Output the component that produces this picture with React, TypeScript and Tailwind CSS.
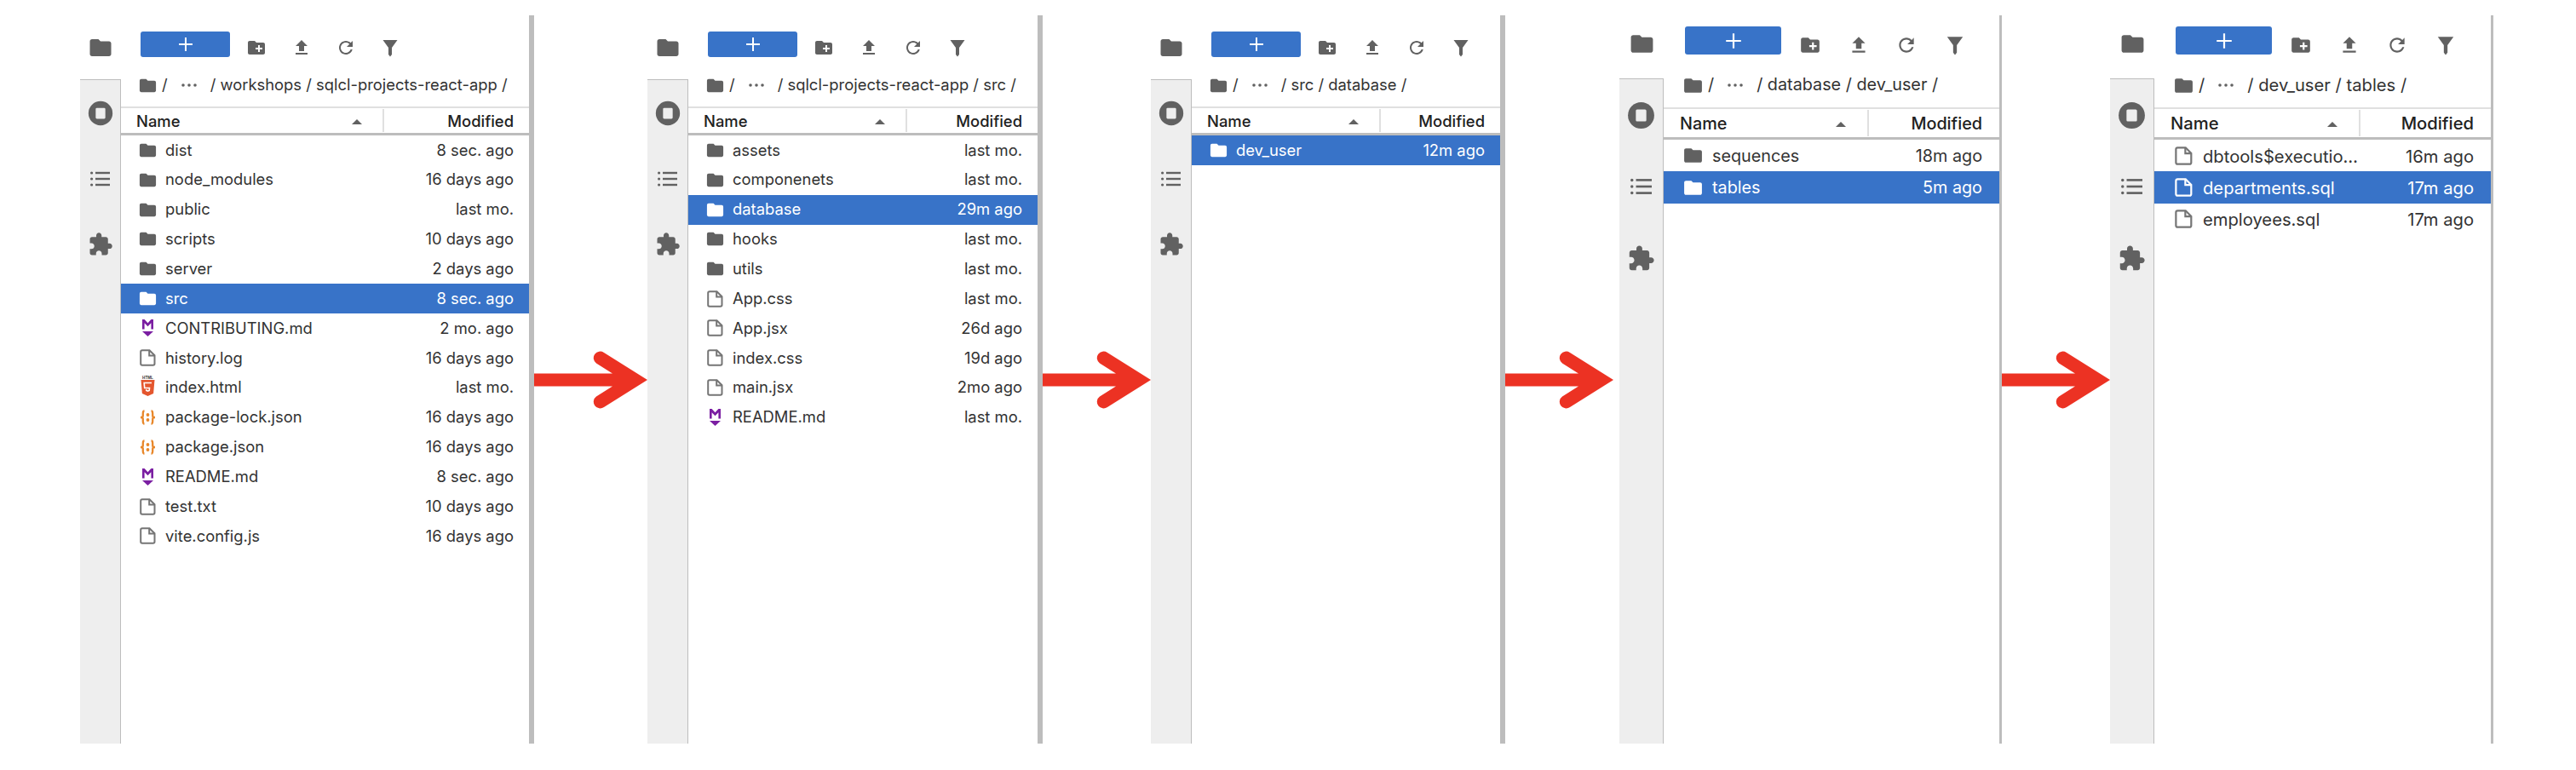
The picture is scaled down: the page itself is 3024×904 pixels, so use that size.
import { FC } from "react";

type Kind = "folder" | "file" | "md" | "html" | "json";

interface Row {
  name: string;
  modified: string;
  kind: Kind;
  selected?: boolean;
}

interface Size {
  sidebar: string;
  sideItem: string;
  sideTop: string;
  topFolder: string;
  stop: string;
  puzzle: string;
  list: string;
  toolbar: string;
  button: string;
  plus: string;
  slot: string;
  tool: string;
  crumb: string;
  header: string;
  namePad: string;
  modPad: string;
  row: string;
  rowText: string;
  rowPad: string;
  icon: string;
  iconBox: string;
  divider: string;
}

const normal: Size = {
  sidebar: "w-[48px]",
  sideItem: "h-[77px]",
  sideTop: "h-[75px]",
  topFolder: "w-[30px] h-[30px]",
  stop: "w-[34px] h-[34px]",
  puzzle: "w-[30px] h-[30px]",
  list: "w-[23px] h-[18px]",
  toolbar: "h-[57px] pt-[19px] pl-[23px]",
  button: "w-[105px] h-[30px] mr-[5px]",
  plus: "w-[20px] h-[20px]",
  slot: "w-[52.4px]",
  tool: "w-[24px] h-[24px]",
  crumb: "h-[50px] pl-[22px]",
  header: "h-[34px] pl-[18px]",
  namePad: "pr-[24px]",
  modPad: "pr-[18px]",
  row: "h-[34.85px] pl-[22px] pr-[18px]",
  rowText: "",
  rowPad: "w-[30px]",
  icon: "w-[23px] h-[23px]",
  iconBox: "w-[19px] h-[20px]",
  divider: "border-r-[6px]",
};

const large: Size = {
  sidebar: "w-[52px]",
  sideItem: "h-[84px]",
  sideTop: "h-[74px] pb-[8px]",
  topFolder: "w-[31px] h-[31px]",
  stop: "w-[37px] h-[37px]",
  puzzle: "w-[33px] h-[33px]",
  list: "w-[25px] h-[20px]",
  toolbar: "h-[56px] pt-[13px] pl-[25px]",
  button: "w-[113px] h-[33px] mr-[6px]",
  plus: "w-[22px] h-[22px]",
  slot: "w-[56.5px]",
  tool: "w-[26px] h-[26px]",
  crumb: "h-[52px] pl-[24px]",
  header: "h-[38px] pl-[19px]",
  namePad: "pr-[25px]",
  modPad: "pr-[20px]",
  row: "h-[37.4px] pl-[24px] pr-[20px]",
  rowText: "pt-[2px]",
  rowPad: "w-[33px]",
  icon: "w-[25px] h-[25px]",
  iconBox: "w-[21px] h-[22px]",
  divider: "border-r-[3px]",
};

const FOLDER =
  "M10 4H4c-1.1 0-1.99.9-1.99 2L2 18c0 1.1.9 2 2 2h16c1.1 0 2-.9 2-2V8c0-1.1-.9-2-2-2h-8l-2-2z";
const NEW_FOLDER =
  "M20 6h-8l-2-2H4c-1.11 0-1.99.89-1.99 2L2 18c0 1.11.89 2 2 2h16c1.11 0 2-.89 2-2V8c0-1.11-.89-2-2-2zm-1 8h-3v3h-2v-3h-3v-2h3V9h2v3h3v2z";
const UPLOAD = "M9 16h6v-6h4l-7-7-7 7h4zm-4 2h14v2H5z";
const REFRESH =
  "M17.65 6.35C16.2 4.9 14.21 4 12 4c-4.42 0-7.99 3.58-7.99 8s3.57 8 7.99 8c3.73 0 6.84-2.55 7.73-6h-2.08c-.82 2.33-3.04 4-5.65 4-3.31 0-6-2.69-6-6s2.69-6 6-6c1.66 0 3.14.69 4.22 1.78L13 11h7V4l-2.35 2.35z";
const FILTER = "M3.5 3h17L14 12V20l-2 2.5L10 20v-8z";
const PUZZLE =
  "M20.5 11H19V7c0-1.1-.9-2-2-2h-4V3.5C13 2.12 11.88 1 10.5 1S8 2.12 8 3.5V5H4c-1.1 0-1.99.9-1.99 2v3.8H3.5c1.49 0 2.7 1.21 2.7 2.7s-1.21 2.7-2.7 2.7H2V20c0 1.1.9 2 2 2h3.8v-1.5c0-1.49 1.21-2.7 2.7-2.7 1.49 0 2.7 1.21 2.7 2.7V22H17c1.1 0 2-.9 2-2v-4h1.5c1.38 0 2.5-1.12 2.5-2.5S21.88 11 20.5 11z";

const Glyph: FC<{ d: string; className: string }> = ({ d, className }) => (
  <svg viewBox="0 0 24 24" className={`shrink-0 fill-current ${className}`}>
    <path d={d} />
  </svg>
);

const FileIcon: FC<{ className: string }> = ({ className }) => (
  <svg viewBox="0 0 19 20" className={`shrink-0 ${className}`} fill="none" stroke="currentColor" strokeWidth="2">
    <path d="M3 1.2h8.5l6 6V17a1.8 1.8 0 0 1-1.8 1.8H3A1.8 1.8 0 0 1 1.2 17V3A1.8 1.8 0 0 1 3 1.2z" />
    <path d="M11.2 1.2v6.2h6.2" />
  </svg>
);

const MarkdownIcon: FC<{ className: string }> = ({ className }) => (
  <svg viewBox="0 0 19 20" className={`shrink-0 overflow-visible ${className}`}>
    <path d="M3 0h2.600L9.500 4.200 13.400 0H16v11.500h-2.600V4.200L9.500 8.200 5.600 4.200v7.300H3z" fill="#7b1fa2" />
    <path d="M3 14h13l-6.500 6z" fill="#7b1fa2" />
  </svg>
);

const HtmlIcon: FC<{ className: string }> = ({ className }) => (
  <svg viewBox="0 0 19 20" className={`shrink-0 overflow-visible ${className}`}>
    <text x="9.5" y="-0.5" textAnchor="middle" fontSize="4.6" fontWeight="700" fill="#333" fontFamily="Liberation Sans, sans-serif">
      HTML
    </text>
    <path d="M1.500 1h16l-1.400 16L9.500 20l-6.600-3z" fill="#e4562e" />
    <path d="M14 4.500H5.200l.5 6h5.800l-.3 3-1.700.6-1.700-.6-.1-1.400" fill="none" stroke="#fff" strokeWidth="1.600" />
  </svg>
);

const JsonIcon: FC<{ className: string }> = ({ className }) => (
  <svg viewBox="0 0 19 20" className={`shrink-0 ${className}`} fill="none" stroke="#e8872a" strokeWidth="2.300">
    <path d="M5.500 2.500C3.800 2.500 3.800 4 3.800 5.500v2.700C3.800 9.300 2.800 10 1 10c1.800 0 2.800.7 2.800 1.800v2.700c0 1.500 0 3 1.700 3" />
    <path d="M13.500 2.500c1.700 0 1.700 1.500 1.700 3v2.700c0 1.100 1 1.800 2.800 1.800-1.800 0-2.800.7-2.800 1.800v2.700c0 1.500 0 3-1.700 3" />
    <circle cx="9.500" cy="7" r="1.900" fill="#e8872a" stroke="none" />
    <circle cx="9.500" cy="13" r="1.900" fill="#e8872a" stroke="none" />
  </svg>
);

const RowIcon: FC<{ kind: Kind; size: Size }> = ({ kind, size }) => {
  if (kind === "folder") {
    return <Glyph d={FOLDER} className={`${size.icon} -mx-[2px]`} />;
  }
  if (kind === "md") return <MarkdownIcon className={size.iconBox} />;
  if (kind === "html") return <HtmlIcon className={size.iconBox} />;
  if (kind === "json") return <JsonIcon className={size.iconBox} />;
  return <FileIcon className={`${size.iconBox} text-[#757575] group-data-[selected=true]:text-white`} />;
};

const Toolbar: FC<{ size: Size }> = ({ size }) => (
  <div className={`flex items-start shrink-0 ${size.toolbar}`}>
    <div className={`flex items-center justify-center rounded-[3px] bg-[#3873c8] ${size.button}`}>
      <svg viewBox="0 0 20 20" className={size.plus} fill="none" stroke="white" strokeWidth="2">
        <path d="M10 2v16M2 10h16" />
      </svg>
    </div>
    {[NEW_FOLDER, UPLOAD, REFRESH, FILTER].map((d) => (
      <div key={d} className={`flex items-center justify-center self-stretch text-[#616161] ${size.slot}`}>
        <Glyph d={d} className={size.tool} />
      </div>
    ))}
  </div>
);

const Sidebar: FC<{ size: Size }> = ({ size }) => (
  <div className={`flex flex-col shrink-0 ${size.sidebar}`}>
    <div className={`flex items-center justify-center text-[#616161] ${size.sideTop}`}>
      <Glyph d={FOLDER} className={size.topFolder} />
    </div>
    <div className="flex-1 flex flex-col bg-[#eeeeee] border-t-[1.5px] border-r-[1.5px] border-[#bdbdbd] text-[#616161]">
      <div className={`flex items-center justify-center ${size.sideItem}`}>
        <svg viewBox="0 0 24 24" className={size.stop}>
          <circle cx="12" cy="12" r="10" fill="#616161" />
          <rect x="8" y="7.500" width="8" height="9" rx="1" fill="#eeeeee" />
        </svg>
      </div>
      <div className={`flex items-center justify-center ${size.sideItem}`}>
        <svg viewBox="0 0 23 18" className={size.list} fill="#616161">
          <circle cx="1.600" cy="2" r="1.600" />
          <circle cx="1.600" cy="9" r="1.600" />
          <circle cx="1.600" cy="16" r="1.600" />
          <rect x="6" y="0.800" width="17" height="2.400" />
          <rect x="6" y="7.800" width="17" height="2.400" />
          <rect x="6" y="14.800" width="17" height="2.400" />
        </svg>
      </div>
      <div className={`flex items-center justify-center ${size.sideItem}`}>
        <Glyph d={PUZZLE} className={size.puzzle} />
      </div>
    </div>
  </div>
);

const Crumbs: FC<{ path: string; size: Size }> = ({ path, size }) => (
  <div className={`flex items-center shrink-0 whitespace-pre text-[#333333] ${size.crumb}`}>
    <Glyph d={FOLDER} className={`${size.icon} -mx-[2px] text-[#616161]`} />
    <span className="ml-[7px]">/</span>
    <svg viewBox="0 0 18 4" className="w-[18px] h-[4px] mx-[16px] fill-[#616161]">
      <circle cx="2" cy="2" r="1.800" />
      <circle cx="9" cy="2" r="1.800" />
      <circle cx="16" cy="2" r="1.800" />
    </svg>
    <span>/ {path} /</span>
  </div>
);

interface PanelProps {
  width: string;
  size: Size;
  fontSize: string;
  modWidth: string;
  path: string;
  rows: Row[];
}

const Panel: FC<PanelProps> = ({ width, size, fontSize, modWidth, path, rows }) => (
  <div className={`flex shrink-0 h-full ${width} ${fontSize}`}>
    <Sidebar size={size} />
    <div className={`flex-1 min-w-0 flex flex-col border-[#bdbdbd] ${size.divider}`}>
      <Toolbar size={size} />
      <Crumbs path={path} size={size} />
      <div className={`flex items-stretch shrink-0 font-medium text-[#212121] border-t-2 border-t-[#e0e0e0] border-b-[3px] border-b-[#bdbdbd] ${size.header}`}>
        <div className={`flex-1 flex items-center justify-between pt-[2px] ${size.namePad}`}>
          <span>Name</span>
          <svg viewBox="0 0 12 6" className="w-[12px] h-[6px] fill-[#616161]">
            <path d="M6 0l6 6H0z" />
          </svg>
        </div>
        <div className={`flex items-center justify-end my-[1px] pt-[2px] border-l-2 border-[#e0e0e0] ${modWidth} ${size.modPad}`}>
          Modified
        </div>
      </div>
      {rows.map((row) => (
        <div
          key={row.name}
          data-selected={row.selected ? "true" : "false"}
          className={`group flex items-center shrink-0 ${size.row} ${
            row.selected ? "bg-[#3873c8] text-white" : "text-[#333333]"
          }`}
        >
          <div className={`flex shrink-0 ${size.rowPad} ${row.selected ? "" : "text-[#616161]"}`}>
            <RowIcon kind={row.kind} size={size} />
          </div>
          <span className={`flex-1 min-w-0 truncate ${size.rowText}`}>{row.name}</span>
          <span className={`shrink-0 ${size.rowText}`}>{row.modified}</span>
        </div>
      ))}
    </div>
  </div>
);

const Arrow: FC<{ width: number; gap?: string }> = ({ width, gap = "" }) => (
  <div className={`flex items-center shrink-0 h-full ${gap}`}>
    <svg width={width} height={70} viewBox={`${-width} -35 ${width} 70`}>
      <path
        d={`M0 0L-51 -32A7.500 7.500 0 0 0 -60 -19.500L-41 -7.500L${-width} -7.500V7.500L-41 7.500L-60 19.500A7.500 7.500 0 0 0 -51 32Z`}
        fill="#ec3223"
      />
    </svg>
  </div>
);

const firstRows: Row[] = [
  { name: "dist", modified: "8 sec. ago", kind: "folder" },
  { name: "node_modules", modified: "16 days ago", kind: "folder" },
  { name: "public", modified: "last mo.", kind: "folder" },
  { name: "scripts", modified: "10 days ago", kind: "folder" },
  { name: "server", modified: "2 days ago", kind: "folder" },
  { name: "src", modified: "8 sec. ago", kind: "folder", selected: true },
  { name: "CONTRIBUTING.md", modified: "2 mo. ago", kind: "md" },
  { name: "history.log", modified: "16 days ago", kind: "file" },
  { name: "index.html", modified: "last mo.", kind: "html" },
  { name: "package-lock.json", modified: "16 days ago", kind: "json" },
  { name: "package.json", modified: "16 days ago", kind: "json" },
  { name: "README.md", modified: "8 sec. ago", kind: "md" },
  { name: "test.txt", modified: "10 days ago", kind: "file" },
  { name: "vite.config.js", modified: "16 days ago", kind: "file" },
];

const srcRows: Row[] = [
  { name: "assets", modified: "last mo.", kind: "folder" },
  { name: "componenets", modified: "last mo.", kind: "folder" },
  { name: "database", modified: "29m ago", kind: "folder", selected: true },
  { name: "hooks", modified: "last mo.", kind: "folder" },
  { name: "utils", modified: "last mo.", kind: "folder" },
  { name: "App.css", modified: "last mo.", kind: "file" },
  { name: "App.jsx", modified: "26d ago", kind: "file" },
  { name: "index.css", modified: "19d ago", kind: "file" },
  { name: "main.jsx", modified: "2mo ago", kind: "file" },
  { name: "README.md", modified: "last mo.", kind: "md" },
];

export default function App() {
  return (
    <div className="flex w-[3024px] h-[904px] bg-white pl-[94px] pt-[18px] pb-[31px] font-['Inter',sans-serif] overflow-hidden">
      <Panel
        width="w-[533px]"
        size={normal}
        fontSize="text-[18.4px]"
        modWidth="w-[172px]"
        path="workshops / sqlcl-projects-react-app"
        rows={firstRows}
      />
      <Arrow width={133} />
      <Panel
        width="w-[464px]"
        size={normal}
        fontSize="text-[18.4px]"
        modWidth="w-[155px]"
        path="sqlcl-projects-react-app / src"
        rows={srcRows}
      />
      <Arrow width={127} />
      <Panel
        width="w-[416px]"
        size={normal}
        fontSize="text-[18.4px]"
        modWidth="w-[142px]"
        path="src / database"
        rows={[{ name: "dev_user", modified: "12m ago", kind: "folder", selected: true }]}
      />
      <Arrow width={127} gap="mr-[7px]" />
      <Panel
        width="w-[449px]"
        size={large}
        fontSize="text-[19.8px]"
        modWidth="w-[155px]"
        path="database / dev_user"
        rows={[
          { name: "sequences", modified: "18m ago", kind: "folder" },
          { name: "tables", modified: "5m ago", kind: "folder", selected: true },
        ]}
      />
      <Arrow width={127} />
      <Panel
        width="w-[450px]"
        size={large}
        fontSize="text-[20.2px]"
        modWidth="w-[155px]"
        path="dev_user / tables"
        rows={[
          { name: "dbtools$executio…", modified: "16m ago", kind: "file" },
          { name: "departments.sql", modified: "17m ago", kind: "file", selected: true },
          { name: "employees.sql", modified: "17m ago", kind: "file" },
        ]}
      />
    </div>
  );
}
